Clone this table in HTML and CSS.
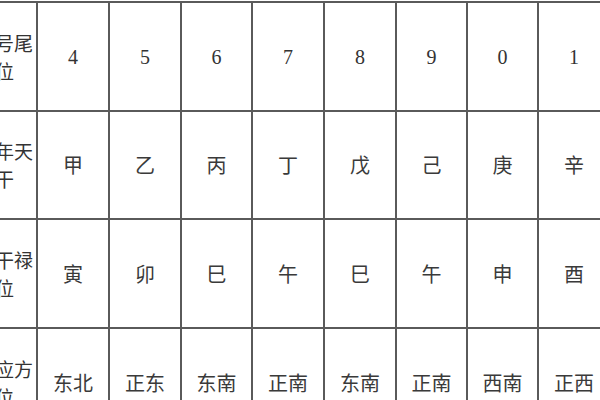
FILE: index.html
```html
<!DOCTYPE html>
<html lang="zh">
<head>
<meta charset="utf-8">
<link rel="stylesheet" href="styles.css">
</head>
<body>
<div class="table">
  <div class="cell head">车号尾位</div>
  <div class="cell num">4</div>
  <div class="cell num">5</div>
  <div class="cell num">6</div>
  <div class="cell num">7</div>
  <div class="cell num">8</div>
  <div class="cell num">9</div>
  <div class="cell num">0</div>
  <div class="cell num">1</div>

  <div class="cell head">生年天干</div>
  <div class="cell">甲</div>
  <div class="cell">乙</div>
  <div class="cell">丙</div>
  <div class="cell">丁</div>
  <div class="cell">戊</div>
  <div class="cell">己</div>
  <div class="cell">庚</div>
  <div class="cell">辛</div>

  <div class="cell head">天干禄位</div>
  <div class="cell">寅</div>
  <div class="cell">卯</div>
  <div class="cell">巳</div>
  <div class="cell">午</div>
  <div class="cell">巳</div>
  <div class="cell">午</div>
  <div class="cell">申</div>
  <div class="cell">酉</div>

  <div class="cell head">对应方位</div>
  <div class="cell">东北</div>
  <div class="cell">正东</div>
  <div class="cell">东南</div>
  <div class="cell">正南</div>
  <div class="cell">东南</div>
  <div class="cell">正南</div>
  <div class="cell">西南</div>
  <div class="cell">正西</div>
</div>
</body>
</html>
```

FILE: styles.css
```css
html, body {
  margin: 0;
  padding: 0;
  background: #ffffff;
  overflow: hidden;
  width: 600px;
  height: 400px;
}

.table {
  display: grid;
  grid-template-columns: 63px 70px 70px 69px 70px 70px 69px 69px 70px;
  grid-template-rows: 107px 106px 107px 107px;
  gap: 2px;
  padding: 2px;
  background: #5a5a5a;
  width: max-content;
  margin: 1px 0 0 -29px;
}

.cell {
  background: #ffffff;
  display: flex;
  align-items: center;
  justify-content: center;
  text-align: center;
  font-family: "Noto Sans CJK SC", "Noto Sans", sans-serif;
  font-size: 20px;
  color: #3a3a3a;
  line-height: 28px;
}

.head {
  font-size: 19px;
  padding: 0 2px;
  color: #333333;
}

.num {
  font-family: "Liberation Serif", "Times New Roman", serif;
  font-size: 20px;
  color: #333333;
}
```
